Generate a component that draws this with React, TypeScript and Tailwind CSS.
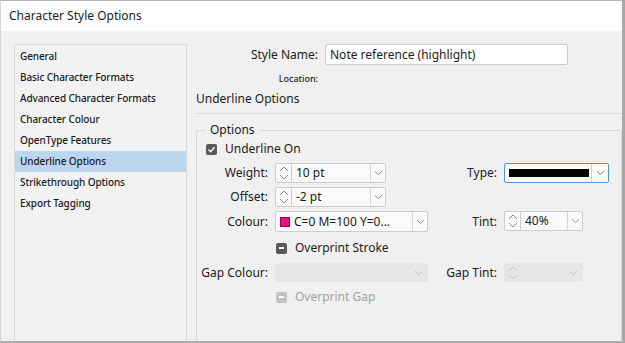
import React from "react";

const font = "font-['Noto_Sans',sans-serif]";

function ChevronDown({ className = "" }: { className?: string }) {
  return (
    <svg width="9" height="6" viewBox="0 0 9 6" className={className}>
      <path d="M1 1.2 L4.5 4.6 L8 1.2" fill="none" stroke="currentColor" strokeWidth="1" />
    </svg>
  );
}

function Stepper({ disabled = false }: { disabled?: boolean }) {
  return (
    <svg width="10" height="16" viewBox="0 0 10 16" className={disabled ? "text-[#c4c4c4]" : "text-[#8a8a8a]"}>
      <path d="M1 6 L5 2 L9 6" fill="none" stroke="currentColor" strokeWidth="1" />
      <path d="M1 10 L5 14 L9 10" fill="none" stroke="currentColor" strokeWidth="1" />
    </svg>
  );
}

function Spinner({ value, width }: { value: string; width: string }) {
  return (
    <div className={`flex h-[20px] ${width}`}>
      <div className="flex w-[17px] items-center justify-center rounded-l-[2px] border border-[#cdcdcd] bg-[#fafafa]">
        <Stepper />
      </div>
      <div className="-ml-px flex flex-1 items-center rounded-r-[2px] border border-[#cdcdcd] bg-[#fafafa]">
        <span className="flex-1 pl-[4px] text-[12px] text-[#1b1b1b]">{value}</span>
        <div className="flex h-full w-[15px] items-center justify-center border-l border-[#d6d6d6] text-[#8a8a8a]">
          <ChevronDown />
        </div>
      </div>
    </div>
  );
}

function Check({ kind, label, disabled = false }: { kind: "check" | "mixed"; label: string; disabled?: boolean }) {
  return (
    <div className="flex items-center gap-[8px]">
      <div
        className={`flex h-[11px] w-[11px] items-center justify-center rounded-[2px] ${
          disabled ? "bg-[#c2c2c2]" : "bg-[#595959]"
        }`}
      >
        {kind === "check" ? (
          <svg width="9" height="9" viewBox="0 0 9 9">
            <path d="M1.5 4.6 L3.6 6.7 L7.6 2.2" fill="none" stroke="white" strokeWidth="1.4" />
          </svg>
        ) : (
          <div className="h-[2px] w-[5px] bg-white" />
        )}
      </div>
      <span className={`text-[12px] ${disabled ? "text-[#a3a3a3]" : "text-[#1b1b1b]"}`}>{label}</span>
    </div>
  );
}

const sections = [
  "General",
  "Basic Character Formats",
  "Advanced Character Formats",
  "Character Colour",
  "OpenType Features",
  "Underline Options",
  "Strikethrough Options",
  "Export Tagging",
];

export default function App() {
  return (
    <div
      className={`${font} flex h-[343px] w-[625px] flex-col overflow-hidden border-t border-l border-r-[3px] border-b-2 border-t-[#b5b5b5] border-l-[#d4d4d4] border-r-[#a9a9a9] border-b-[#acacac] bg-[#f0f0f0] text-[#1b1b1b]`}
    >
      <div className="flex h-[30px] shrink-0 items-center bg-white pl-[8px] text-[12px]">Character Style Options</div>

      <div className="flex min-h-0 flex-1 pt-[13px]">
        {/* section list */}
        <div className="ml-[13px] w-[173px] shrink-0 border border-b-0 border-[#d9d9d9] bg-[#f2f2f2] pt-px">
          {sections.map((s) => (
            <div
              key={s}
              className={`flex h-[21px] items-center pl-[5px] text-[10px] font-medium tracking-[-0.1px] ${
                s === "Underline Options" ? "bg-[#bcd6f0]" : ""
              }`}
            >
              {s}
            </div>
          ))}
        </div>

        {/* settings */}
        <div className="ml-[9px] flex min-w-0 flex-1 flex-col">
          <div className="flex h-[21px] items-center">
            <span className="w-[122px] text-right text-[12px]">Style Name:</span>
            <div className="ml-[7px] flex h-[21px] w-[243px] items-center rounded-[2px] border border-[#cbcbcb] bg-white pl-[4px] text-[12px]">
              Note reference (highlight)
            </div>
          </div>
          <div className="mt-[7px] flex h-[14px] items-center">
            <span className="w-[122px] text-right text-[9px] font-medium">Location:</span>
          </div>
          <div className="mt-[4px] h-[17px] text-[12px] leading-[17px]">Underline Options</div>
          <div className="mt-[6px] mr-[-10px] h-px bg-[#dcdcdc]" />

          <fieldset className="mt-[9px] min-h-0 flex-1 rounded-[2px] border border-b-0 border-[#d6d6d6] px-0 pb-0">
            <legend className="ml-[9px] px-[4px] text-[12px] leading-[14px]">Options</legend>

            <div className="ml-[9px] mt-[3px]">
              <Check kind="check" label="Underline On" />
            </div>

            <div className="mt-[5px] grid grid-cols-[71px_153px_62px_105px] gap-x-[7px] gap-y-[4px] text-[12px]">
              <span className="self-center text-right">Weight:</span>
              <Spinner value="10 pt" width="w-[111px]" />
              <span className="self-center text-right">Type:</span>
              <div className="flex h-[20px] items-center rounded-[2px] border border-[#4f95dc] bg-white">
                <div className="ml-[4px] h-[8px] flex-1 bg-black" />
                <div className="ml-[2px] flex h-full w-[17px] items-center justify-center border-l border-[#d0d0d0] text-[#7a7a7a]">
                  <ChevronDown />
                </div>
              </div>

              <span className="self-center text-right">Offset:</span>
              <Spinner value="-2 pt" width="w-[111px]" />
              <span />
              <span />

              <span className="self-center text-right">Colour:</span>
              <div className="flex h-[21px] items-center rounded-[2px] border border-[#cdcdcd] bg-[#fafafa]">
                <div className="ml-[4px] h-[10px] w-[10px] border border-[#8a0b4a] bg-[#e5127f]" />
                <span className="ml-[4px] flex-1">C=0 M=100 Y=0...</span>
                <div className="flex h-full w-[15px] items-center justify-center border-l border-[#d6d6d6] text-[#8a8a8a]">
                  <ChevronDown />
                </div>
              </div>
              <span className="self-center text-right">Tint:</span>
              <Spinner value="40%" width="w-[79px]" />
            </div>

            <div className="ml-[79px] mt-[7px]">
              <Check kind="mixed" label="Overprint Stroke" />
            </div>

            <div className="mt-[6px] grid grid-cols-[71px_153px_62px_105px] gap-x-[7px] text-[12px]">
              <span className="self-center text-right">Gap Colour:</span>
              <div className="flex h-[19px] items-center justify-end rounded-[2px] bg-[#e6e6e6] pr-[5px] text-[#bdbdbd]">
                <ChevronDown />
              </div>
              <span className="self-center text-right">Gap Tint:</span>
              <div className="flex h-[19px] w-[79px] items-center rounded-[2px] bg-[#e6e6e6]">
                <div className="flex w-[17px] justify-center">
                  <Stepper disabled />
                </div>
                <div className="flex flex-1 justify-end pr-[5px] text-[#bdbdbd]">
                  <ChevronDown />
                </div>
              </div>
            </div>

            <div className="ml-[79px] mt-[6px]">
              <Check kind="mixed" label="Overprint Gap" disabled />
            </div>
          </fieldset>
        </div>
      </div>
    </div>
  );
}
